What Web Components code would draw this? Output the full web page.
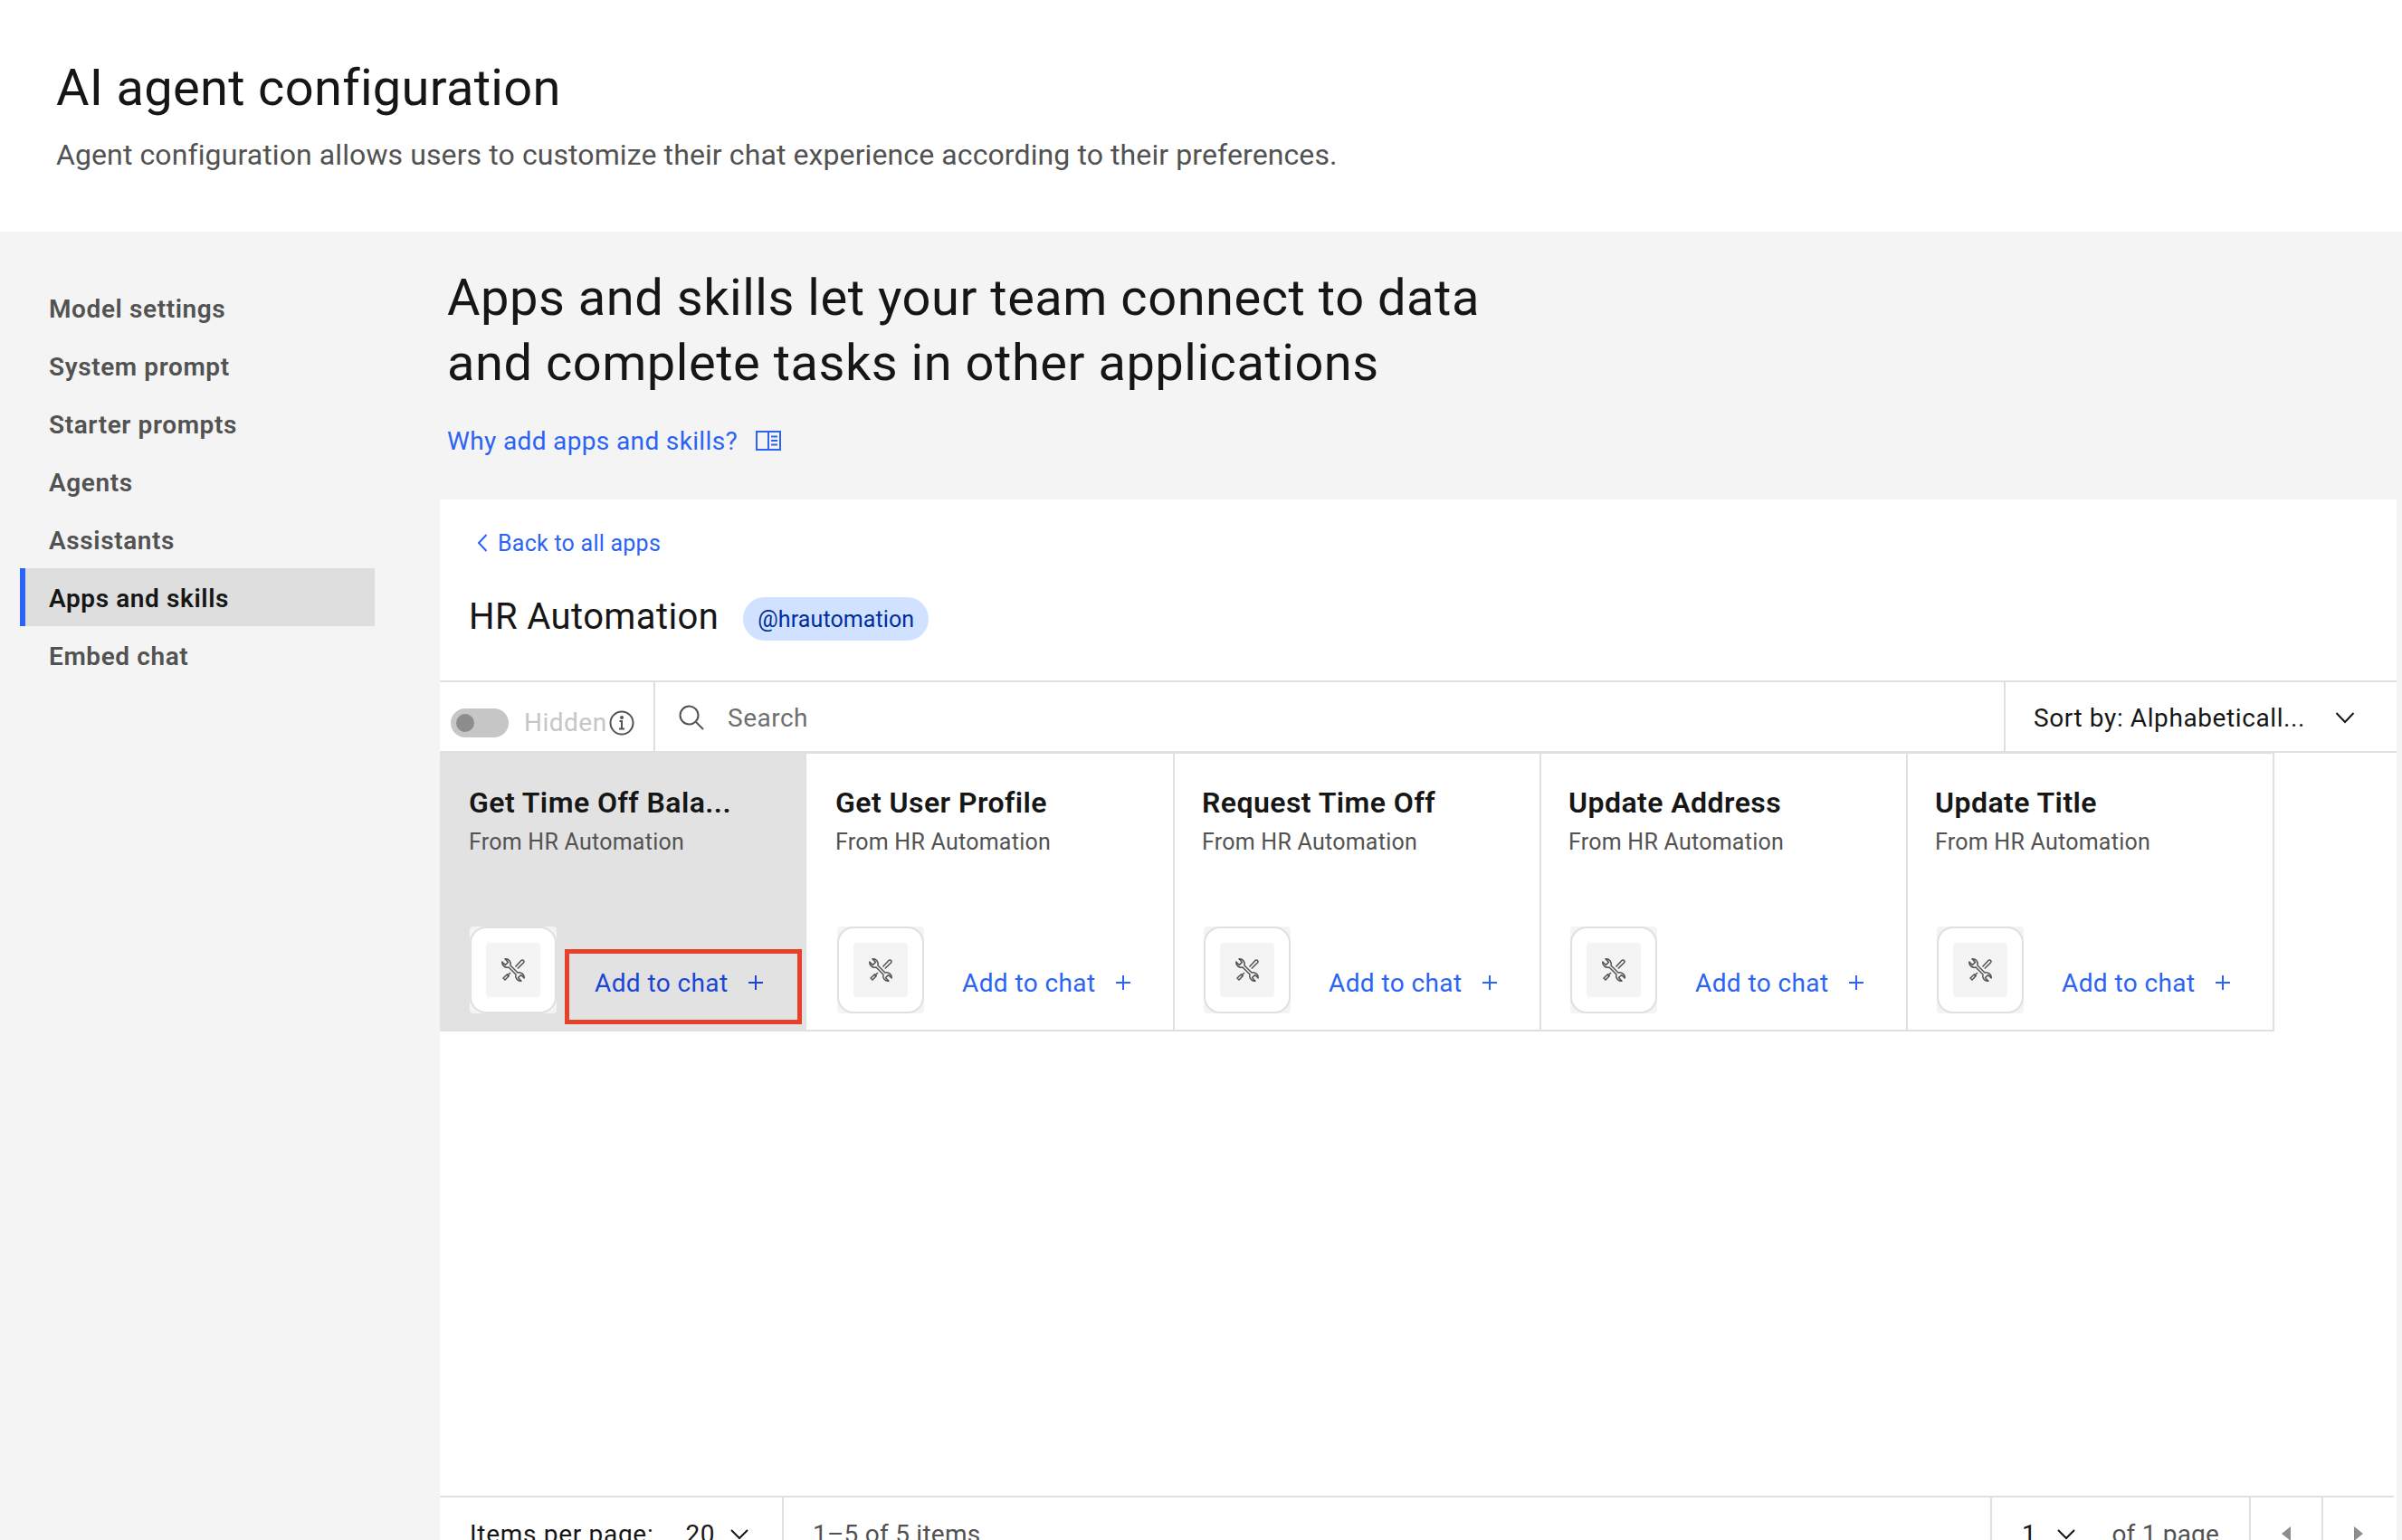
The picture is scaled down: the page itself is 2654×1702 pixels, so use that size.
<!DOCTYPE html>
<html lang="en">
<head>
<meta charset="utf-8">
<title>AI agent configuration</title>
<style>
    html, body { margin: 0; height: 1702px; overflow: hidden; }
    body { background: #f4f4f4; color: #161616; font-family: Roboto, "Liberation Sans", sans-serif; }
    .layout { display: flex; height: 1446px; }
</style>
</head>
<body>
<page-header>
    <span slot="title">AI agent configuration</span>
    Agent configuration allows users to customize their chat experience according to their preferences.
</page-header>
<div class="layout">
    <side-nav>
        <nav-item>Model settings</nav-item>
        <nav-item>System prompt</nav-item>
        <nav-item>Starter prompts</nav-item>
        <nav-item>Agents</nav-item>
        <nav-item>Assistants</nav-item>
        <nav-item active>Apps and skills</nav-item>
        <nav-item>Embed chat</nav-item>
    </side-nav>
    <main-column>
        <span slot="heading">Apps and skills let your team connect to data<br>and complete tasks in other applications</span>
        <span slot="link">Why add apps and skills?</span>
        <app-panel>
            <span slot="back">Back to all apps</span>
            <span slot="name">HR Automation</span>
            <span slot="tag">@hrautomation</span>
            <panel-toolbar slot="toolbar"></panel-toolbar>
            <skill-card selected name="Get Time Off Bala..."></skill-card>
            <skill-card wide name="Get User Profile"></skill-card>
            <skill-card name="Request Time Off"></skill-card>
            <skill-card name="Update Address"></skill-card>
            <skill-card name="Update Title"></skill-card>
            <pager-bar slot="pager"></pager-bar>
        </app-panel>
    </main-column>
</div>

<script>
class PageHeader extends HTMLElement {
    constructor() {
        super();
        this.attachShadow({ mode: "open" }).innerHTML = `
            <style>
                :host { display: block; height: 256px; box-sizing: border-box; padding: 65px 0 0 62px; background: #fff; }
                h1 { margin: 0; font-size: 56px; line-height: 64px; font-weight: 400; color: #161616; letter-spacing: 0.3px; }
                p { margin: 20px 0 0; font-size: 32px; line-height: 44px; color: #525252; letter-spacing: 0.1px; }
            </style>
            <h1><slot name="title"></slot></h1>
            <p><slot></slot></p>
        `;
    }
}
customElements.define("page-header", PageHeader);

class SideNav extends HTMLElement {
    constructor() {
        super();
        this.attachShadow({ mode: "open" }).innerHTML = `
            <style>
                :host { display: flex; flex-direction: column; flex: 0 0 486px; box-sizing: border-box; padding: 52px 72px 0 22px; }
            </style>
            <slot></slot>
        `;
    }
}
customElements.define("side-nav", SideNav);

class NavItem extends HTMLElement {
    constructor() {
        super();
        this.attachShadow({ mode: "open" }).innerHTML = `
            <style>
                :host { display: flex; align-items: center; height: 64px; box-sizing: border-box; padding: 2px 0 0 26px; border-left: 6px solid transparent;
                    font-size: 28px; font-weight: 600; color: #525252; letter-spacing: 0.6px; }
                :host([active]) { background: #dedede; border-left-color: #2b63f6; color: #161616; }
            </style>
            <slot></slot>
        `;
    }
}
customElements.define("nav-item", NavItem);

class MainColumn extends HTMLElement {
    constructor() {
        super();
        this.attachShadow({ mode: "open" }).innerHTML = `
            <style>
                :host { display: block; flex: 1; min-width: 0; padding: 37px 6px 0 0; }
                h2 { margin: 0 0 0 8px; font-size: 56px; line-height: 72px; font-weight: 400; color: #161616; letter-spacing: 0.52px; }
                a { display: flex; align-items: center; gap: 20px; margin: 30px 0 45px 8px; height: 40px; font-size: 28px; color: #2b63f6; letter-spacing: 0.36px; }
                svg { width: 28px; height: 22px; }
            </style>
            <h2><slot name="heading"></slot></h2>
            <a><slot name="link"></slot>
                <svg viewBox="0 0 28 22" fill="none" stroke="#2b63f6" stroke-width="2">
                    <rect x="1" y="1" width="26" height="20"/>
                    <path d="M14 1v20M17 6.500h7M17 11h7M17 15.500h7"/>
                </svg>
            </a>
            <slot></slot>
        `;
    }
}
customElements.define("main-column", MainColumn);

class AppPanel extends HTMLElement {
    constructor() {
        super();
        this.attachShadow({ mode: "open" }).innerHTML = `
            <style>
                :host { display: flex; flex-direction: column; height: 1183px; background: #fff; }
                .head { height: 200px; box-sizing: border-box; padding: 32px 0 0 32px; }
                .back { display: flex; align-items: center; gap: 10px; height: 32px; padding-left: 8px; font-size: 25px; color: #2b63f6; letter-spacing: 0.25px; }
                .back svg { width: 14px; height: 22px; }
                .title { display: flex; align-items: flex-start; gap: 27px; margin-top: 44px; }
                .name { font-size: 40px; line-height: 44px; color: #161616; letter-spacing: 0.4px; }
                .tag { height: 48px; line-height: 50px; padding: 0 16px; border-radius: 24px; background: #d0e2ff; color: #002d9c; font-size: 25px; letter-spacing: 0.1px; }
                .cards { display: flex; flex: 1; align-items: flex-start; }
            </style>
            <div class="head">
                <div class="back">
                    <svg viewBox="0 0 14 22" fill="none" stroke="#2b63f6" stroke-width="2"><path d="M11.500 2 3 11l8.500 9"/></svg>
                    <slot name="back"></slot>
                </div>
                <div class="title">
                    <span class="name"><slot name="name"></slot></span>
                    <span class="tag"><slot name="tag"></slot></span>
                </div>
            </div>
            <slot name="toolbar"></slot>
            <div class="cards"><slot></slot></div>
            <slot name="pager"></slot>
        `;
    }
}
customElements.define("app-panel", AppPanel);

class PanelToolbar extends HTMLElement {
    constructor() {
        super();
        this.attachShadow({ mode: "open" }).innerHTML = `
            <style>
                :host { display: flex; flex: 0 0 80px; box-sizing: border-box; border-top: 2px solid #e0e0e0; border-bottom: 2px solid #e0e0e0; }
                .hidden { display: flex; align-items: center; flex: 0 0 238px; box-sizing: border-box; padding: 13px 0 0 12px; border-right: 2px solid #e0e0e0; color: #c6c6c6; font-size: 28px; letter-spacing: 0.5px; }
                .toggle { display: flex; align-items: center; width: 64px; height: 32px; box-sizing: border-box; padding-left: 6px; margin-right: 17px; border-radius: 16px; background: #c6c6c6; }
                .knob { width: 20px; height: 20px; border-radius: 50%; background: #8d8d8d; }
                .info { width: 28px; height: 28px; margin-left: 2px; }
                .search { display: flex; align-items: center; flex: 1; padding: 2px 0 0 26px; gap: 26px; color: #6f6f6f; font-size: 28px; letter-spacing: 0.5px; }
                .search svg { width: 28px; height: 28px; }
                .sort { display: flex; align-items: center; flex: 0 0 434px; box-sizing: border-box; padding: 2px 0 0 31px; border-left: 2px solid #e0e0e0; color: #161616; font-size: 28px; letter-spacing: 0.6px; }
                .sort svg { width: 22px; height: 14px; margin-left: 33px; }
            </style>
            <div class="hidden">
                <span class="toggle"><span class="knob"></span></span>
                <span>Hidden</span>
                <svg class="info" viewBox="0 0 28 28" fill="none" stroke="#525252" stroke-width="2">
                    <circle cx="14" cy="14" r="12.500"/>
                    <path d="M11 20.500h6M14 20.500V12h-2.500"/>
                    <circle cx="14" cy="8" r="1" fill="#525252"/>
                </svg>
            </div>
            <div class="search">
                <svg viewBox="0 0 28 28" fill="none" stroke="#525252" stroke-width="2"><circle cx="11.500" cy="11.500" r="10"/><path d="m19 19 8 8"/></svg>
                <span>Search</span>
            </div>
            <div class="sort">
                <span>Sort by: Alphabeticall...</span>
                <svg viewBox="0 0 22 14" fill="none" stroke="#161616" stroke-width="2"><path d="m1.500 2 9.500 10 9.500-10"/></svg>
            </div>
        `;
    }
}
customElements.define("panel-toolbar", PanelToolbar);

class SkillCard extends HTMLElement {
    constructor() {
        super();
        const name = this.getAttribute("name");
        this.attachShadow({ mode: "open" }).innerHTML = `
            <style>
                :host { position: relative; display: flex; flex-direction: column; flex: 0 0 405px; height: 308px; box-sizing: border-box; padding: 0 0 18px 30px;
                    border-top: 1px solid #e0e0e0; border-right: 2px solid #e0e0e0; border-bottom: 2px solid #e0e0e0; }
                :host([selected]) { padding-left: 32px; background: #e2e2e2; }
                :host([wide]) { flex-basis: 407px; padding-left: 32px; }
                h3 { margin: 32px 0 0; font-size: 32px; line-height: 44px; font-weight: 600; color: #161616; letter-spacing: 0.45px; }
                p { margin: 0; font-size: 25px; line-height: 44px; color: #525252; letter-spacing: 0.25px; }
                .foot { display: flex; align-items: flex-end; margin-top: auto; }
                .logo { width: 96px; height: 96px; margin-left: 2px; background: #f4f4f4; border-radius: 4px; }
                :host([selected]) .logo { margin-left: 1px; }
                .logo-in { display: flex; align-items: center; justify-content: center; height: 100%; box-sizing: border-box; background: #fff; border: 2px solid #e0e0e0; border-radius: 18px; }
                .logo-box { display: flex; align-items: center; justify-content: center; width: 60px; height: 60px; background: #f4f4f4; border-radius: 4px; }
                .logo-box svg { width: 28px; height: 28px; }
                button { display: flex; align-items: center; height: 64px; margin: 0 0 2px 42px; padding: 0; border: 0; background: none; font: inherit; font-size: 28px; color: #2b63f6; letter-spacing: 0.4px; }
                :host([selected]) button { color: #1a46d6; }
                button svg { width: 18px; height: 18px; margin-left: 22px; }
                .mark { display: none; position: absolute; left: 138px; top: 216px; width: 262px; height: 83px; box-sizing: border-box; border: 5px solid #e8412a; }
                :host([selected]) .mark { display: block; }
            </style>
            <h3>${name}</h3>
            <p>From HR Automation</p>
            <div class="foot">
                <div class="logo"><div class="logo-in"><div class="logo-box">
                    <svg viewBox="0 0 28 28" fill="none" stroke="#525252" stroke-width="1.500" stroke-linejoin="round">
                        <path d="M5 1.800 8.500 5.400 5.400 8.500 1.800 5A5.600 5.600 0 0 0 9 11L17 19A5.600 5.600 0 0 0 23 26.200L19.500 22.600 22.600 19.500 26.200 23A5.600 5.600 0 0 0 19 17L11 9A5.600 5.600 0 0 0 5 1.800Z"/>
                        <path d="M16.500 10.500 23.200 3.300A1.800 1.800 0 0 1 25.700 5.800L18.800 12.500M11 17 7.500 20.500M7.500 18.700 9.300 20.500 5 25 3 23Z"/>
                    </svg>
                </div></div></div>
                <button>Add to chat
                    <svg viewBox="0 0 18 18" fill="none" stroke="currentColor" stroke-width="2"><path d="M9 1v16M1 9h16"/></svg>
                </button>
            </div>
            <div class="mark"></div>
        `;
    }
}
customElements.define("skill-card", SkillCard);

class PagerBar extends HTMLElement {
    constructor() {
        super();
        this.attachShadow({ mode: "open" }).innerHTML = `
            <style>
                :host { display: flex; flex: 0 0 82px; box-sizing: border-box; border-top: 2px solid #e0e0e0; margin-right: 3px; font-size: 28px; letter-spacing: 0.7px; color: #161616; }
                .cell { display: flex; align-items: center; box-sizing: border-box; height: 80px; }
                .per { flex: 0 0 380px; padding-left: 33px; border-right: 2px solid #e0e0e0; }
                .count { flex: 1; padding-left: 32px; color: #525252; letter-spacing: 0.25px; }
                .page { flex: 0 0 286px; padding-left: 33px; border-left: 2px solid #e0e0e0; }
                .page .of { margin-left: 40px; color: #525252; letter-spacing: 0.2px; }
                .nav { flex: 0 0 80px; justify-content: center; border-left: 2px solid #e0e0e0; }
                .chev { width: 20px; height: 13px; }
                .per .chev { margin-left: 17px; }
                .page .chev { margin-left: 23px; }
                .per .val { margin-left: 35px; }
                .arrow { width: 12px; height: 18px; }
            </style>
            <div class="cell per">
                <span>Items per page:</span><span class="val">20</span>
                <svg class="chev" viewBox="0 0 20 13" fill="none" stroke="#161616" stroke-width="2"><path d="m1 2 9 9 9-9"/></svg>
            </div>
            <div class="cell count">1–5 of 5 items</div>
            <div class="cell page">
                <span>1</span>
                <svg class="chev" viewBox="0 0 20 13" fill="none" stroke="#161616" stroke-width="2"><path d="m1 2 9 9 9-9"/></svg>
                <span class="of">of 1 page</span>
            </div>
            <div class="cell nav"><svg class="arrow" viewBox="0 0 12 18" fill="#8d8d8d"><path d="M11 1v16L1 9z"/></svg></div>
            <div class="cell nav"><svg class="arrow" viewBox="0 0 12 18" fill="#8d8d8d"><path d="M1 1v16l10-8z"/></svg></div>
        `;
    }
}
customElements.define("pager-bar", PagerBar);
</script>
</body>
</html>
